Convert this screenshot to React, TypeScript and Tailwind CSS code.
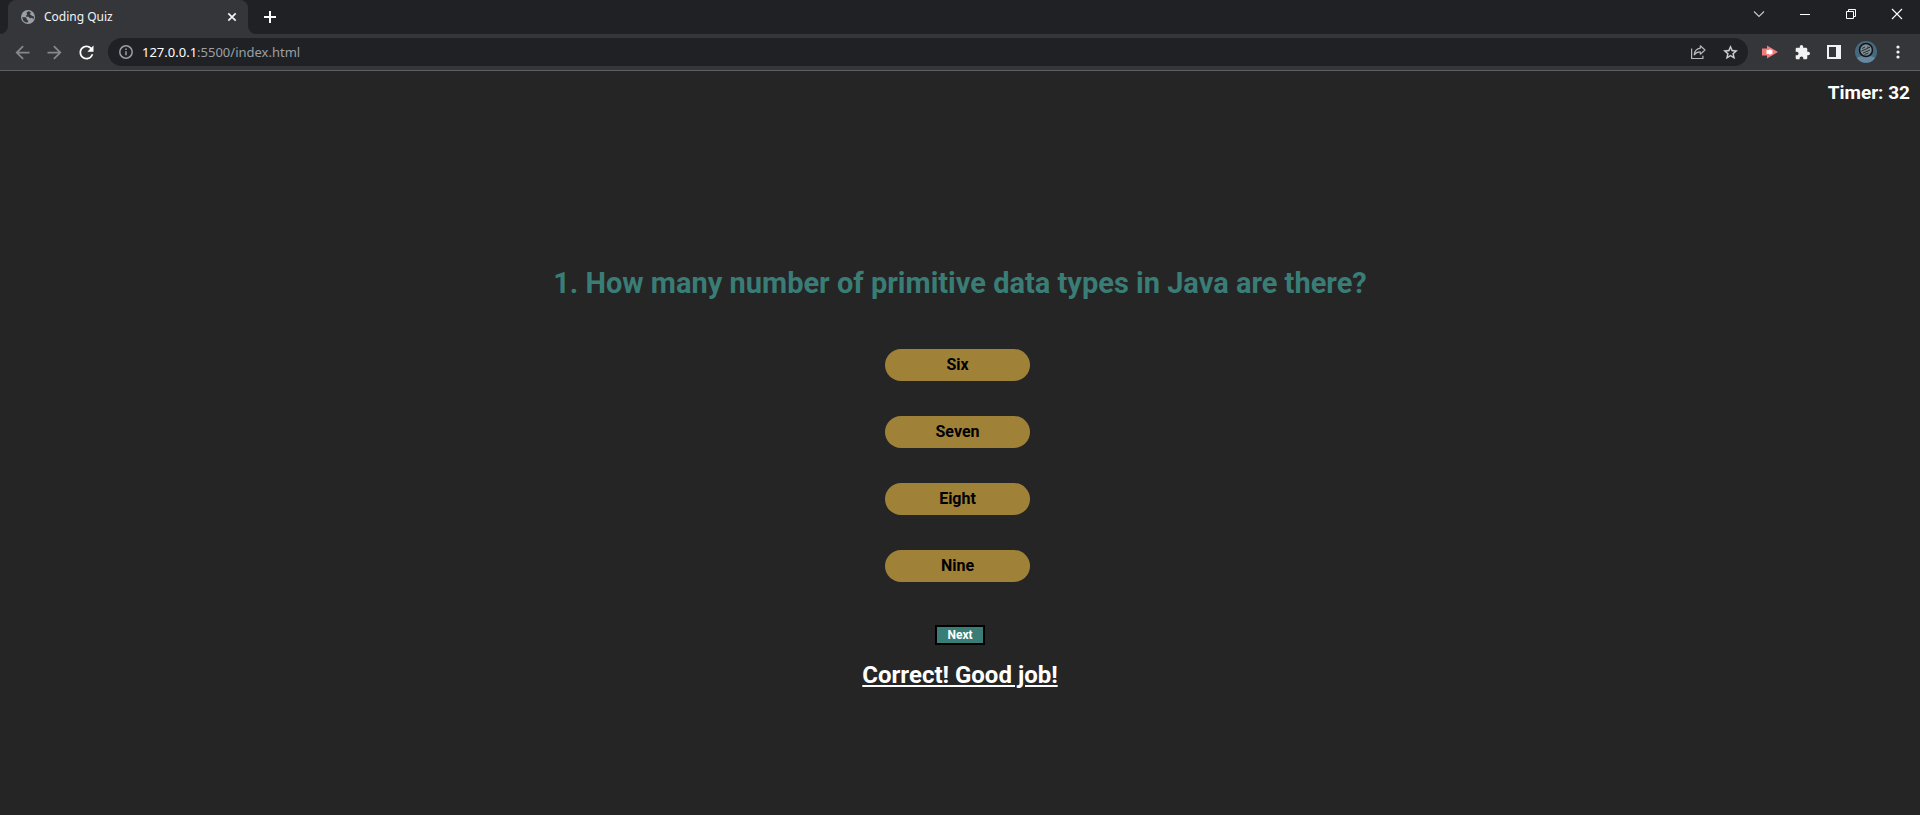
import { useState, type ReactNode } from "react";

const ANSWERS = ["Six", "Seven", "Eight", "Nine"];

function ChromeButton({ label, className, children }: { label: string; className: string; children: ReactNode }) {
  return (
    <button type="button" aria-label={label} className={`flex shrink-0 items-center justify-center ${className}`}>
      {children}
    </button>
  );
}

function TabStrip() {
  return (
    <div className="flex h-[34px] items-stretch bg-[#202124]">
      <svg className="h-2 w-2 shrink-0 self-end" viewBox="0 0 8 8" fill="#35363a" aria-hidden="true">
        <path d="M8 0v8H0a8 8 0 0 0 8-8z" />
      </svg>
      <div className="flex w-[240px] shrink-0 items-center rounded-t-lg bg-[#35363a] pr-2 pl-3">
        <svg className="size-4 shrink-0" viewBox="0 0 16 16" aria-hidden="true">
          <circle cx="8" cy="8" r="7" fill="#9aa0a6" />
          <path
            d="M8.600 2.200c-1 .3-2 .9-2.100 1.800 0 .8.900.8.700 1.500-.2.700-1.300.6-1.300 1.400 0 .9 1.600.6 2.500.9 1 .3.900 1.200 1.800 1.400 1 .2 1.200-.6 2-.3.700.3.600 1.300 1.400 1.300A5.700 5.700 0 0 0 13.600 7c-.8.300-1.500.1-1.900-.5-.4-.7-1.500-.4-1.600-1.300-.1-.7.8-.9.800-1.600A5.600 5.600 0 0 0 8.600 2.200zM2.300 8.100a5.700 5.700 0 0 0 5 5.600c.1-.8 1-1 1-1.700 0-.9-1.200-.7-1.500-1.500-.3-.7.100-1.200-.6-1.700C5.200 8.100 3.400 8.600 2.300 8.100z"
            fill="#35363a"
          />
        </svg>
        <span className="ml-2 flex-1 font-['Noto_Sans','Open_Sans',sans-serif] text-[12px] leading-4 text-[#f1f3f4]">
          Coding Quiz
        </span>
        <ChromeButton label="Close tab" className="size-4">
          <svg className="size-4" viewBox="0 0 16 16" stroke="#f1f3f4" strokeWidth="1.7" aria-hidden="true">
            <path d="M4.300 4.300l7.400 7.400M11.700 4.300l-7.400 7.400" />
          </svg>
        </ChromeButton>
      </div>
      <svg className="h-2 w-2 shrink-0 self-end" viewBox="0 0 8 8" fill="#35363a" aria-hidden="true">
        <path d="M0 0v8h8a8 8 0 0 1-8-8z" />
      </svg>
      <ChromeButton label="New tab" className="w-7">
        <svg className="size-4" viewBox="0 0 16 16" stroke="#fff" strokeWidth="2" aria-hidden="true">
          <path d="M8 2v12M2 8h12" />
        </svg>
      </ChromeButton>
      <div className="ml-auto flex h-7">
        <ChromeButton label="Search tabs" className="w-[46px]">
          <svg className="size-3" viewBox="0 0 12 12" fill="none" stroke="#c8c9cb" strokeWidth="1.1" aria-hidden="true">
            <path d="M1 3.500l5 5 5-5" />
          </svg>
        </ChromeButton>
        <ChromeButton label="Minimize" className="w-[46px]">
          <svg className="size-3" viewBox="0 0 12 12" fill="#fff" aria-hidden="true">
            <path d="M1 6h10v1H1z" />
          </svg>
        </ChromeButton>
        <ChromeButton label="Restore" className="w-[46px]">
          <svg className="size-3" viewBox="0 0 12 12" fill="none" stroke="#fff" aria-hidden="true">
            <path d="M1.500 3.500h7v7h-7zM3.500 3.500v-2h7v7h-2" />
          </svg>
        </ChromeButton>
        <ChromeButton label="Close window" className="w-[46px]">
          <svg className="size-3" viewBox="0 0 12 12" stroke="#fff" strokeWidth="1.100" aria-hidden="true">
            <path d="M1 1l10 10M11 1L1 11" />
          </svg>
        </ChromeButton>
      </div>
    </div>
  );
}

function Toolbar() {
  return (
    <div className="flex h-[37px] items-center border-b border-[#5f6063] bg-[#35363a] px-[6px]">
      <ChromeButton label="Back" className="w-8">
        <svg className="size-[21px]" viewBox="0 0 24 24" fill="#86888a" aria-hidden="true">
          <path d="M20 11H7.830l5.590-5.590L12 4l-8 8 8 8 1.410-1.410L7.830 13H20z" />
        </svg>
      </ChromeButton>
      <ChromeButton label="Forward" className="w-8">
        <svg className="size-[21px]" viewBox="0 0 24 24" fill="#86888a" aria-hidden="true">
          <path d="M4 11h12.170l-5.590-5.590L12 4l8 8-8 8-1.410-1.410L16.170 13H4z" />
        </svg>
      </ChromeButton>
      <ChromeButton label="Reload" className="w-8">
        <svg className="size-[21px]" viewBox="0 0 24 24" fill="#fff" aria-hidden="true">
          <path d="M17.650 6.350A7.958 7.958 0 0 0 12 4c-4.420 0-7.990 3.580-7.990 8s3.570 8 7.990 8c3.730 0 6.840-2.550 7.730-6h-2.080A5.990 5.990 0 0 1 12 18c-3.310 0-6-2.690-6-6s2.690-6 6-6c1.660 0 3.140.690 4.220 1.780L13 11h7V4l-2.350 2.350z" />
        </svg>
      </ChromeButton>
      <div className="ml-[6px] flex h-7 min-w-0 flex-1 items-center rounded-full bg-[#202124] pr-[2px] pl-[10px] font-['Noto_Sans','Open_Sans',sans-serif] text-[13px] leading-5">
        <svg className="size-4 shrink-0" viewBox="0 0 16 16" fill="none" stroke="#9aa0a6" strokeWidth="1.500" aria-hidden="true">
          <circle cx="8" cy="8" r="6.200" />
          <path d="M8 7.200v4M8 4.600v1.500" />
        </svg>
        <span className="ml-2 flex-1 text-[#9aa0a6]">
          <span className="text-white">127.0.0.1</span>:5500/index.html
        </span>
        <ChromeButton label="Share" className="w-8">
          <svg className="size-4" viewBox="0 0 16 16" fill="none" stroke="#b5b8ba" strokeWidth="1.200" aria-hidden="true">
            <path d="M1.600 4.500v10h11.300v-2.800" />
            <path d="M10.300 1.800l4.700 4.200-4.700 4.200V7.800C7.500 7.800 5.600 8.700 4.200 10.800 4.600 7.400 6.600 4.700 10.300 4.200z" strokeLinejoin="round" />
          </svg>
        </ChromeButton>
        <ChromeButton label="Bookmark this page" className="w-8">
          <svg className="size-[17px]" viewBox="0 0 24 24" fill="#d5d7d9" stroke="#d5d7d9" strokeWidth=".4" aria-hidden="true">
            <path d="M22 9.240l-7.190-.620L12 2 9.190 8.630 2 9.240l5.460 4.730L5.820 21 12 17.270 18.180 21l-1.630-7.030L22 9.240zM12 15.400l-3.760 2.270 1-4.280-3.320-2.880 4.380-.380L12 6.100l1.710 4.040 4.380.380-3.320 2.880 1 4.280L12 15.400z" />
          </svg>
        </ChromeButton>
      </div>
      <ChromeButton label="Video extension" className="ml-[6px] w-8">
        <svg className="size-4" viewBox="0 0 16 16" aria-hidden="true">
          <path d="M0 4.500h5V1.500l11 6.500-11 6.500v-3H0z" fill="#f57b78" />
          <path d="M4.500 6h3V5l3 1.500v3L7.500 11v-1h-3z" fill="#fff" />
        </svg>
      </ChromeButton>
      <ChromeButton label="Extensions" className="w-8">
        <svg className="size-[15px]" viewBox="1 1 22 22" fill="#f1f3f4" aria-hidden="true">
          <path d="M20.500 11H19V7c0-1.100-.900-2-2-2h-4V3.500a2.500 2.500 0 0 0-5 0V5H4c-1.100 0-1.990.900-1.990 2v3.800H3.500c1.490 0 2.700 1.210 2.700 2.700s-1.210 2.700-2.700 2.700H2V20c0 1.100.900 2 2 2h3.800v-1.500c0-1.490 1.210-2.700 2.700-2.700s2.700 1.210 2.700 2.700V22H17c1.100 0 2-.900 2-2v-4h1.500a2.500 2.500 0 0 0 0-5z" />
        </svg>
      </ChromeButton>
      <ChromeButton label="Side panel" className="w-8">
        <svg className="size-4" viewBox="0 0 16 16" fill="#f1f3f4" fillRule="evenodd" aria-hidden="true">
          <path d="M1 1h14v14H1zM3 3v10h7V3z" />
        </svg>
      </ChromeButton>
      <ChromeButton label="Profile" className="w-8">
        <svg className="size-[22px]" viewBox="0 0 22 22" aria-hidden="true">
          <circle cx="11" cy="11" r="11" fill="#47697f" />
          <path d="M2 17a11 11 0 0 0 18 0c-4-3-14-3-18 0z" fill="#6689a0" />
          <circle cx="11" cy="9" r="6.500" fill="#7f8f96" stroke="#111517" strokeWidth="1.600" />
          <path d="M7 7.500l3-1.500M12 6l3 .500M6.500 10l7-3M8 12l7-3M9.500 13.500l4-1.500" stroke="#252e33" strokeWidth="1" />
        </svg>
      </ChromeButton>
      <ChromeButton label="Menu" className="w-8">
        <svg className="size-4" viewBox="0 0 16 16" fill="#f1f3f4" aria-hidden="true">
          <circle cx="8" cy="3" r="1.600" />
          <circle cx="8" cy="8" r="1.600" />
          <circle cx="8" cy="13" r="1.600" />
        </svg>
      </ChromeButton>
    </div>
  );
}

export default function App() {
  const [picked, setPicked] = useState("Eight");
  return (
    <div className="flex min-h-screen flex-col bg-[#252525]">
      <header>
        <TabStrip />
        <Toolbar />
      </header>
      <main className="flex flex-1 flex-col items-center font-['Roboto','Liberation_Sans',Arial,sans-serif] font-bold">
        <p className="self-end px-[10px] pt-[10px] text-[19px] leading-6 text-white">Timer: 32</p>
        <h1 className="mt-40 text-center text-[29px] leading-9 text-[#397d76]">
          1. How many number of primitive data types in Java are there?
        </h1>
        <div className="mt-12 mr-[5px] flex flex-col gap-[35px]">
          {ANSWERS.map((answer) => (
            <button
              key={answer}
              type="button"
              onClick={() => setPicked(answer)}
              className="h-8 w-[145px] rounded-full bg-[#9f8138] text-[16px] leading-6 text-black"
            >
              {answer}
            </button>
          ))}
        </div>
        <button type="button" className="mt-[43px] h-5 w-[50px] border-2 border-black bg-[#397d76] text-[12px] leading-4 text-white">
          Next
        </button>
        <p className="mt-4 text-[24px] leading-7 text-white underline decoration-2 underline-offset-2">
          {picked === "Eight" ? "Correct! Good job!" : "Wrong answer!"}
        </p>
      </main>
    </div>
  );
}
